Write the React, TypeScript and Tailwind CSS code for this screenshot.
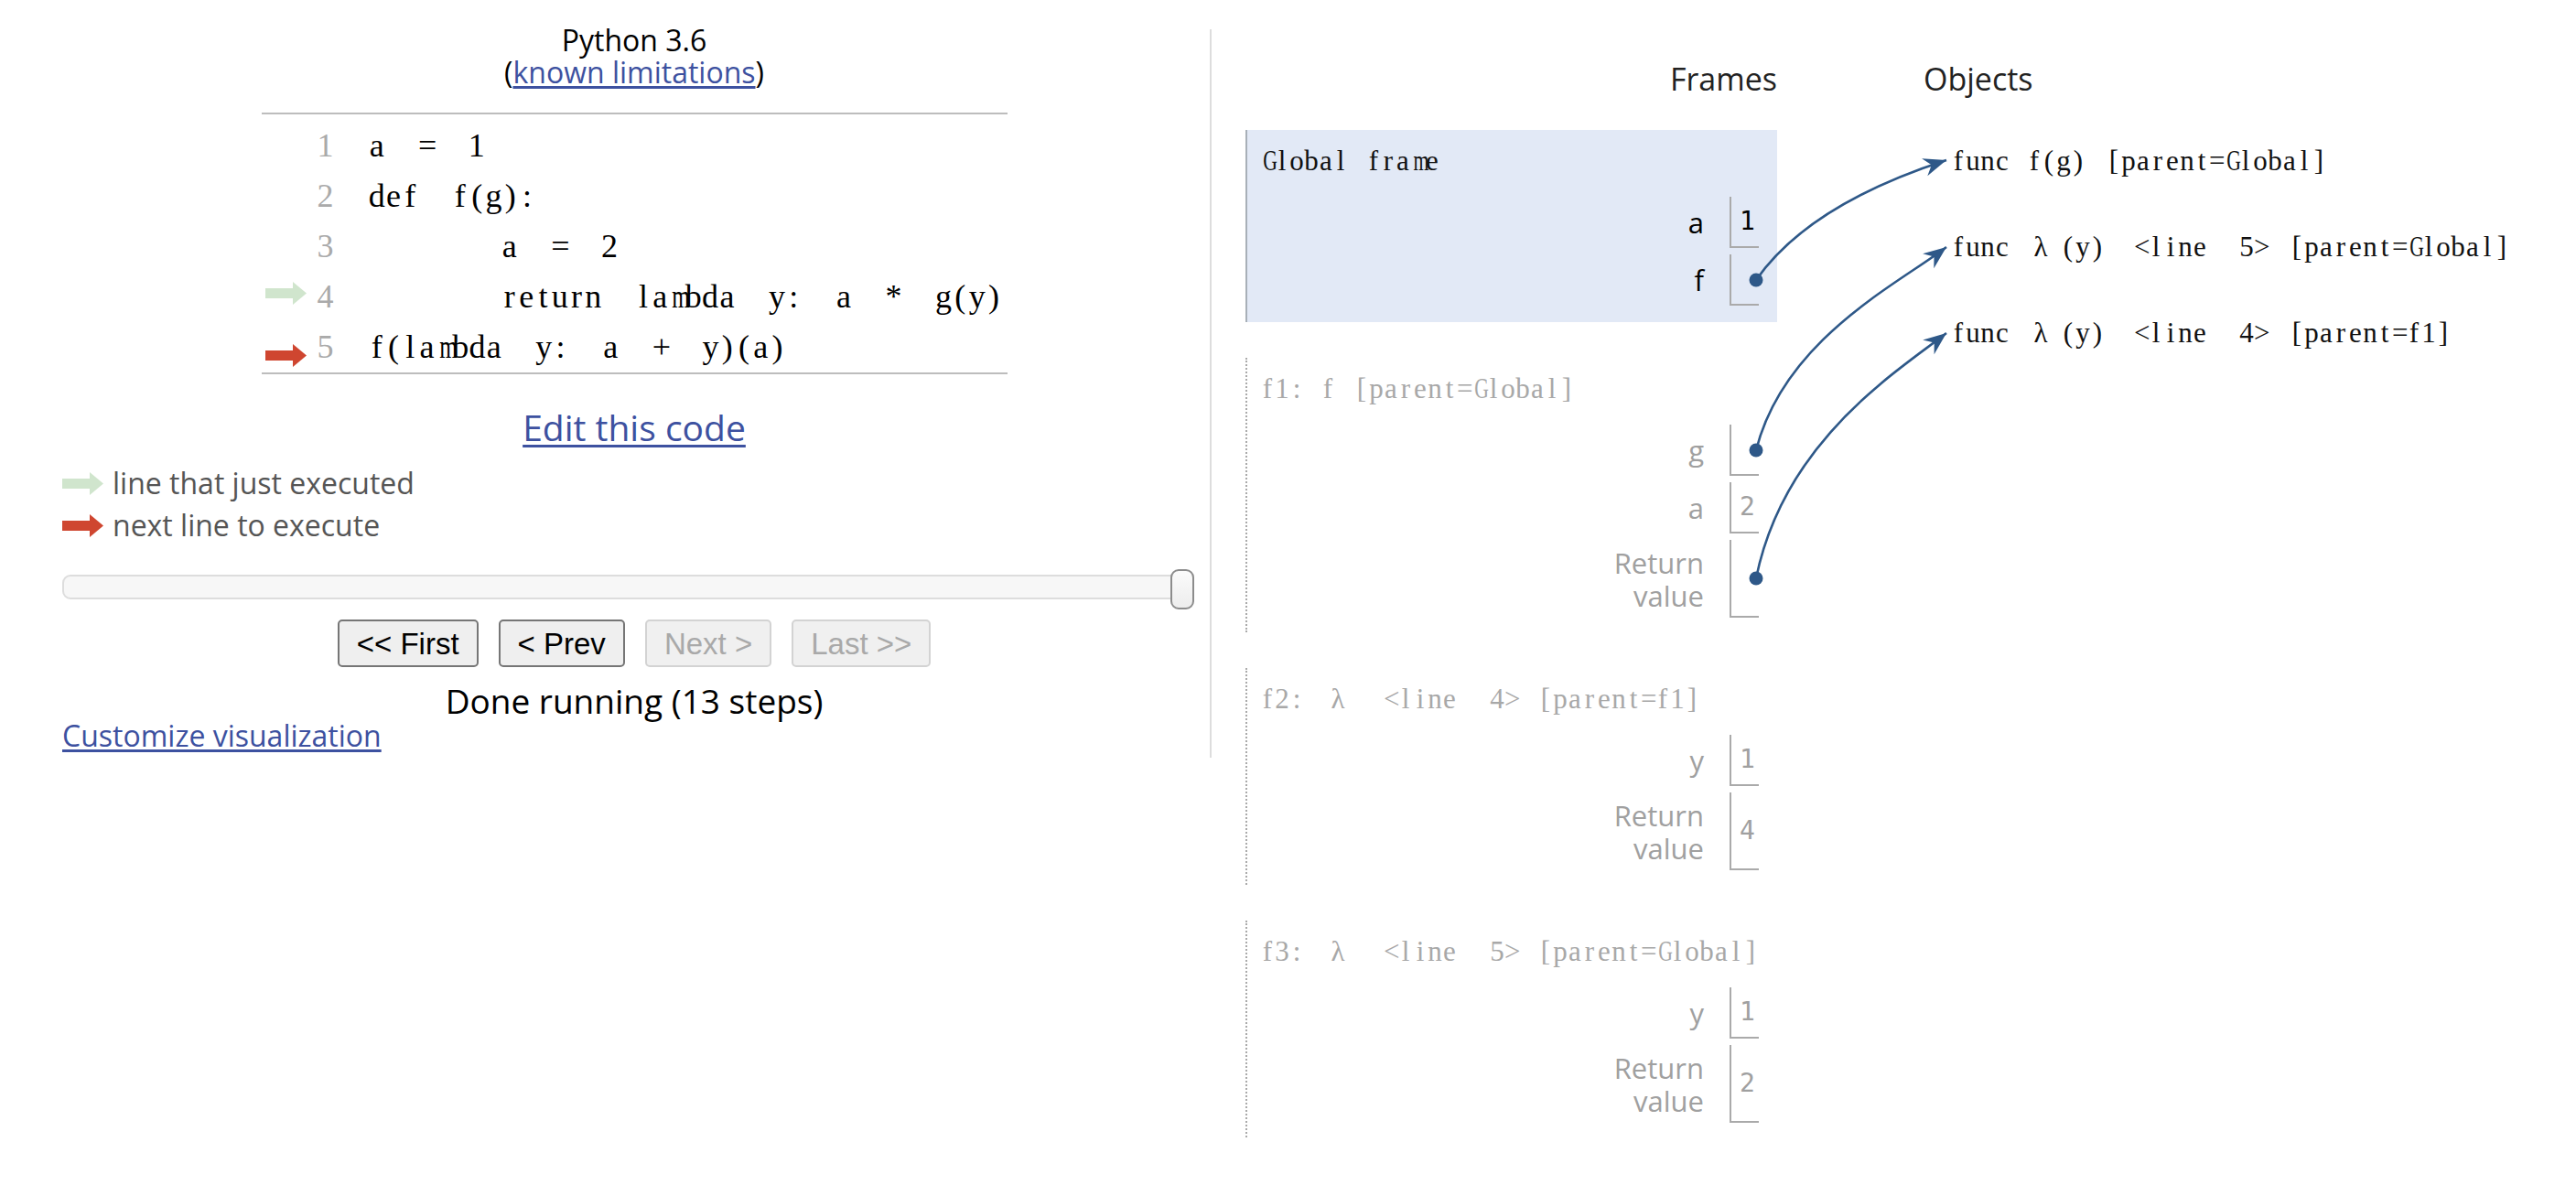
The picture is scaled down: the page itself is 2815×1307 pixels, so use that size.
import React from "react";

const ARROW = "#2e5888";
const WIDE = new Set(["m", "w", "G", "M", "W"]);

function Cells({ text, cell, space }: { text: string; cell: string; space: string }) {
  return (
    <>
      {Array.from(text).map((ch, i) =>
        ch === " " ? (
          <span key={i} className={"inline-block " + space}>
            {" "}
          </span>
        ) : (
          <span key={i} className={"inline-block text-center " + cell}>
            <span className={"inline-block " + (WIDE.has(ch) ? "scale-x-[0.7]" : "")}>{ch}</span>
          </span>
        )
      )}
    </>
  );
}

type Seg = { t: string; w?: string };

function Label({ segs, className }: { segs: Seg[]; className?: string }) {
  return (
    <div
      className={
        "flex whitespace-pre font-['Liberation_Serif',serif] text-[31px] leading-[34px] " + (className ?? "")
      }
    >
      {segs.map((s, i) => (
        <span key={i} className={"shrink-0 " + (s.w ?? "")}>
          <Cells text={s.t} cell="w-[16px]" space="w-[21px]" />
        </span>
      ))}
    </div>
  );
}

function VarRow({
  name,
  value,
  tall,
  dim,
}: {
  name: React.ReactNode;
  value?: string;
  tall?: boolean;
  dim?: boolean;
}) {
  return (
    <div className={"flex justify-end " + (tall ? "h-[85px]" : "h-[56px]")}>
      <div
        className={
          "flex items-center justify-end pr-[28px] text-right font-['Open_Sans',sans-serif] text-[31px] leading-[36px] " +
          (dim ? "text-[#a0a0a0]" : "text-black")
        }
      >
        {name}
      </div>
      <div
        className={
          "w-[32px] shrink-0 border-l-2 border-b-2 border-[#aaaaaa] flex items-center pl-[9px] font-['DejaVu_Sans_Mono',monospace] text-[28px] " +
          (dim ? "text-[#a0a0a0]" : "text-black")
        }
      >
        {value ?? ""}
      </div>
    </div>
  );
}

const RetName = () => (
  <span>
    Return
    <br />
    value
  </span>
);

function GutterArrow({ color }: { color: string }) {
  return (
    <svg width="45" height="25" viewBox="0 0 45 25">
      <rect x="0" y="7" width="31" height="11" fill={color} />
      <polygon points="30,0 45,12.5 30,25" fill={color} />
    </svg>
  );
}

const codeLines = [
  "a = 1",
  "def f(g):",
  "    a = 2",
  "    return lambda y: a * g(y)",
  "f(lambda y: a + y)(a)",
];

type Pt = [number, number];
const arrows: Pt[][] = [
  [
    [1919, 306],
    [1965, 240],
    [2050, 200],
    [2127, 175],
  ],
  [
    [1919, 492],
    [1950, 370],
    [2075, 310],
    [2127, 270],
  ],
  [
    [1919, 632],
    [1950, 480],
    [2075, 405],
    [2127, 364],
  ],
];

function headPoints(p2: Pt, p3: Pt) {
  const dx = p3[0] - p2[0];
  const dy = p3[1] - p2[1];
  const len = Math.hypot(dx, dy);
  const ux = dx / len;
  const uy = dy / len;
  const nx = -uy;
  const ny = ux;
  const L = 25;
  const W = 10;
  const notch = 8;
  const T = p3;
  const b1: Pt = [T[0] - L * ux + W * nx, T[1] - L * uy + W * ny];
  const n: Pt = [T[0] - (L - notch) * ux, T[1] - (L - notch) * uy];
  const b2: Pt = [T[0] - L * ux - W * nx, T[1] - L * uy - W * ny];
  return [T, b1, n, b2].map((p) => p[0].toFixed(1) + "," + p[1].toFixed(1)).join(" ");
}

export default function App() {
  const sans = "font-['Open_Sans',sans-serif]";
  return (
    <div className="relative flex w-[2815px] h-[1307px] bg-white overflow-hidden">
      {/* Left pane */}
      <div className="w-[1322px] shrink-0 pl-[68px] pt-[26px]">
        <div className={"w-[1250px] flex flex-col " + sans}>
          <div className="text-center text-[32px] leading-[35px] text-black">Python 3.6</div>
          <div className="text-center text-[32px] leading-[35px] text-black">
            (<a className="text-[#3d51a0] underline underline-offset-[3px]">known limitations</a>)
          </div>

          {/* code */}
          <div className="mx-auto mt-[27px] w-[815px] border-t-2 border-b-2 border-[#bdbdbd] pt-[3px] pb-[4px]">
            {codeLines.map((line, i) => (
              <div key={i} className="flex h-[55px]">
                <div className="w-[49px] shrink-0 pl-[4px] flex items-center">
                  {i === 3 && <GutterArrow color="#d0e5cd" />}
                  {i === 4 && (
                    <div className="mt-[25px]">
                      <GutterArrow color="#cf4630" />
                    </div>
                  )}
                </div>
                <div className="w-[30px] shrink-0 text-right pt-[12px] leading-[39px] font-['Liberation_Serif',serif] text-[36px] text-[#aaaaaa]">
                  {i + 1}
                </div>
                <div className="ml-[38px] pt-[12px] leading-[39px] whitespace-pre font-['Liberation_Serif',serif] text-[36px] text-black">
                  <Cells text={line} cell="w-[18.3px]" space="w-[36.3px]" />
                </div>
              </div>
            ))}
          </div>

          <div className="mt-[34px] text-center text-[39px] leading-[48px]">
            <a className="text-[#3d51a0] underline underline-offset-[4px]">Edit this code</a>
          </div>

          {/* legend */}
          <div className="mt-[14px] flex flex-col">
            <div className="flex items-center h-[46px]">
              <GutterArrow color="#d0e5cd" />
              <span className="ml-[10px] text-[32px] text-[#555555]">line that just executed</span>
            </div>
            <div className="flex items-center h-[46px]">
              <GutterArrow color="#cf4630" />
              <span className="ml-[10px] text-[32px] text-[#555555]">next line to execute</span>
            </div>
          </div>

          {/* slider */}
          <div className="relative mt-[25px] w-[1237px] h-[44px]">
            <div className="absolute left-0 right-[14px] top-[6px] h-[27px] rounded-[9px] border-2 border-[#dddddd] bg-[#f7f7f7]" />
            <div className="absolute right-0 top-0 w-[26px] h-[44px] rounded-[9px] border-2 border-[#8c8c8c] bg-gradient-to-b from-[#fbfbfb] to-[#ededed]" />
          </div>

          {/* buttons */}
          <div className="mt-[11px] flex justify-center gap-[22px] font-['Liberation_Sans',Arial,sans-serif] text-[33px]">
            <button className="h-[52px] px-[19px] rounded-[5px] border-2 border-[#767676] bg-[#efefef] text-black leading-none">
              &lt;&lt; First
            </button>
            <button className="h-[52px] px-[19px] rounded-[5px] border-2 border-[#767676] bg-[#efefef] text-black leading-none">
              &lt; Prev
            </button>
            <button className="h-[52px] px-[19px] rounded-[5px] border-2 border-[#d3d3d3] bg-[#f0f0f0] text-[#a9a9a9] leading-none">
              Next &gt;
            </button>
            <button className="h-[52px] px-[19px] rounded-[5px] border-2 border-[#d3d3d3] bg-[#f0f0f0] text-[#a9a9a9] leading-none">
              Last &gt;&gt;
            </button>
          </div>

          <div className="mt-[19px] text-center text-[37px] leading-[36px] text-black">Done running (13 steps)</div>
          <div className="text-[32px] leading-[40px]">
            <a className="text-[#3d51a0] underline underline-offset-[3px]">Customize visualization</a>
          </div>
        </div>
      </div>

      {/* divider */}
      <div className="w-[2px] shrink-0 mt-[32px] h-[796px] bg-[#dddddd]" />

      {/* Right pane */}
      <div className="flex-1 pl-[37px] pt-[66px]">
        <div className={"flex text-[34px] leading-[40px] text-[#222222] " + sans}>
          <div className="w-[581px] shrink-0 text-right">Frames</div>
          <div className="ml-[160px]">Objects</div>
        </div>

        <div className="flex mt-[36px]">
          <div className="w-[581px] shrink-0 flex flex-col gap-[39px]">
            {/* Global frame */}
            <div className="bg-[#e2e9f6] border-l-2 border-[#a8b0b8] pt-[17px] pb-[18px] pl-[14px] pr-[20px]">
              <Label className="text-[#111111]" segs={[{ t: "Global", w: "w-[116px]" }, { t: "frame" }]} />
              <div className="mt-[22px] flex flex-col gap-[7px]">
                <VarRow name="a" value="1" />
                <VarRow name="f" />
              </div>
            </div>

            {/* f1 */}
            <div className="border-l-2 border-dotted border-[#aaaaaa] pt-[17px] pb-[16px] pl-[14px] pr-[20px]">
              <Label
                className="text-[#a8a8a8]"
                segs={[{ t: "f1:", w: "w-[66px]" }, { t: "f", w: "w-[37px]" }, { t: "[parent=Global]" }]}
              />
              <div className="mt-[22px] flex flex-col gap-[7px]">
                <VarRow name="g" dim />
                <VarRow name="a" value="2" dim />
                <VarRow name={<RetName />} tall dim />
              </div>
            </div>

            {/* f2 */}
            <div className="border-l-2 border-dotted border-[#aaaaaa] pt-[17px] pb-[16px] pl-[14px] pr-[20px]">
              <Label
                className="text-[#a8a8a8]"
                segs={[
                  { t: "f2:", w: "w-[77px]" },
                  { t: "λ", w: "w-[58px]" },
                  { t: "<line", w: "w-[116px]" },
                  { t: "4>", w: "w-[53px]" },
                  { t: "[parent=f1]" },
                ]}
              />
              <div className="mt-[22px] flex flex-col gap-[7px]">
                <VarRow name="y" value="1" dim />
                <VarRow name={<RetName />} value="4" tall dim />
              </div>
            </div>

            {/* f3 */}
            <div className="border-l-2 border-dotted border-[#aaaaaa] pt-[17px] pb-[16px] pl-[14px] pr-[20px]">
              <Label
                className="text-[#a8a8a8]"
                segs={[
                  { t: "f3:", w: "w-[77px]" },
                  { t: "λ", w: "w-[58px]" },
                  { t: "<line", w: "w-[116px]" },
                  { t: "5>", w: "w-[53px]" },
                  { t: "[parent=Global]" },
                ]}
              />
              <div className="mt-[22px] flex flex-col gap-[7px]">
                <VarRow name="y" value="1" dim />
                <VarRow name={<RetName />} value="2" tall dim />
              </div>
            </div>
          </div>

          {/* objects */}
          <div className="ml-[160px] pl-[30px] pt-[17px] flex flex-col gap-[60px]">
            <Label
              className="text-[#111111]"
              segs={[{ t: "func", w: "w-[83px]" }, { t: "f(g)", w: "w-[87px]" }, { t: "[parent=Global]" }]}
            />
            <Label
              className="text-[#111111]"
              segs={[
                { t: "func", w: "w-[90px]" },
                { t: "λ", w: "w-[30px]" },
                { t: "(y)", w: "w-[80px]" },
                { t: "<line", w: "w-[115px]" },
                { t: "5>", w: "w-[55px]" },
                { t: "[parent=Global]" },
              ]}
            />
            <Label
              className="text-[#111111]"
              segs={[
                { t: "func", w: "w-[90px]" },
                { t: "λ", w: "w-[30px]" },
                { t: "(y)", w: "w-[80px]" },
                { t: "<line", w: "w-[115px]" },
                { t: "4>", w: "w-[55px]" },
                { t: "[parent=f1]" },
              ]}
            />
          </div>
        </div>
      </div>

      {/* pointer arrows overlay */}
      <svg className="absolute left-0 top-0 pointer-events-none" width="2815" height="1307">
        {arrows.map((p, i) => (
          <g key={i}>
            <path
              d={`M ${p[0][0]} ${p[0][1]} C ${p[1][0]} ${p[1][1]}, ${p[2][0]} ${p[2][1]}, ${p[3][0]} ${p[3][1]}`}
              fill="none"
              stroke={ARROW}
              strokeWidth="2.6"
            />
            <polygon points={headPoints(p[2], p[3])} fill={ARROW} />
            <circle cx={p[0][0]} cy={p[0][1]} r="7.5" fill={ARROW} />
          </g>
        ))}
      </svg>
    </div>
  );
}
